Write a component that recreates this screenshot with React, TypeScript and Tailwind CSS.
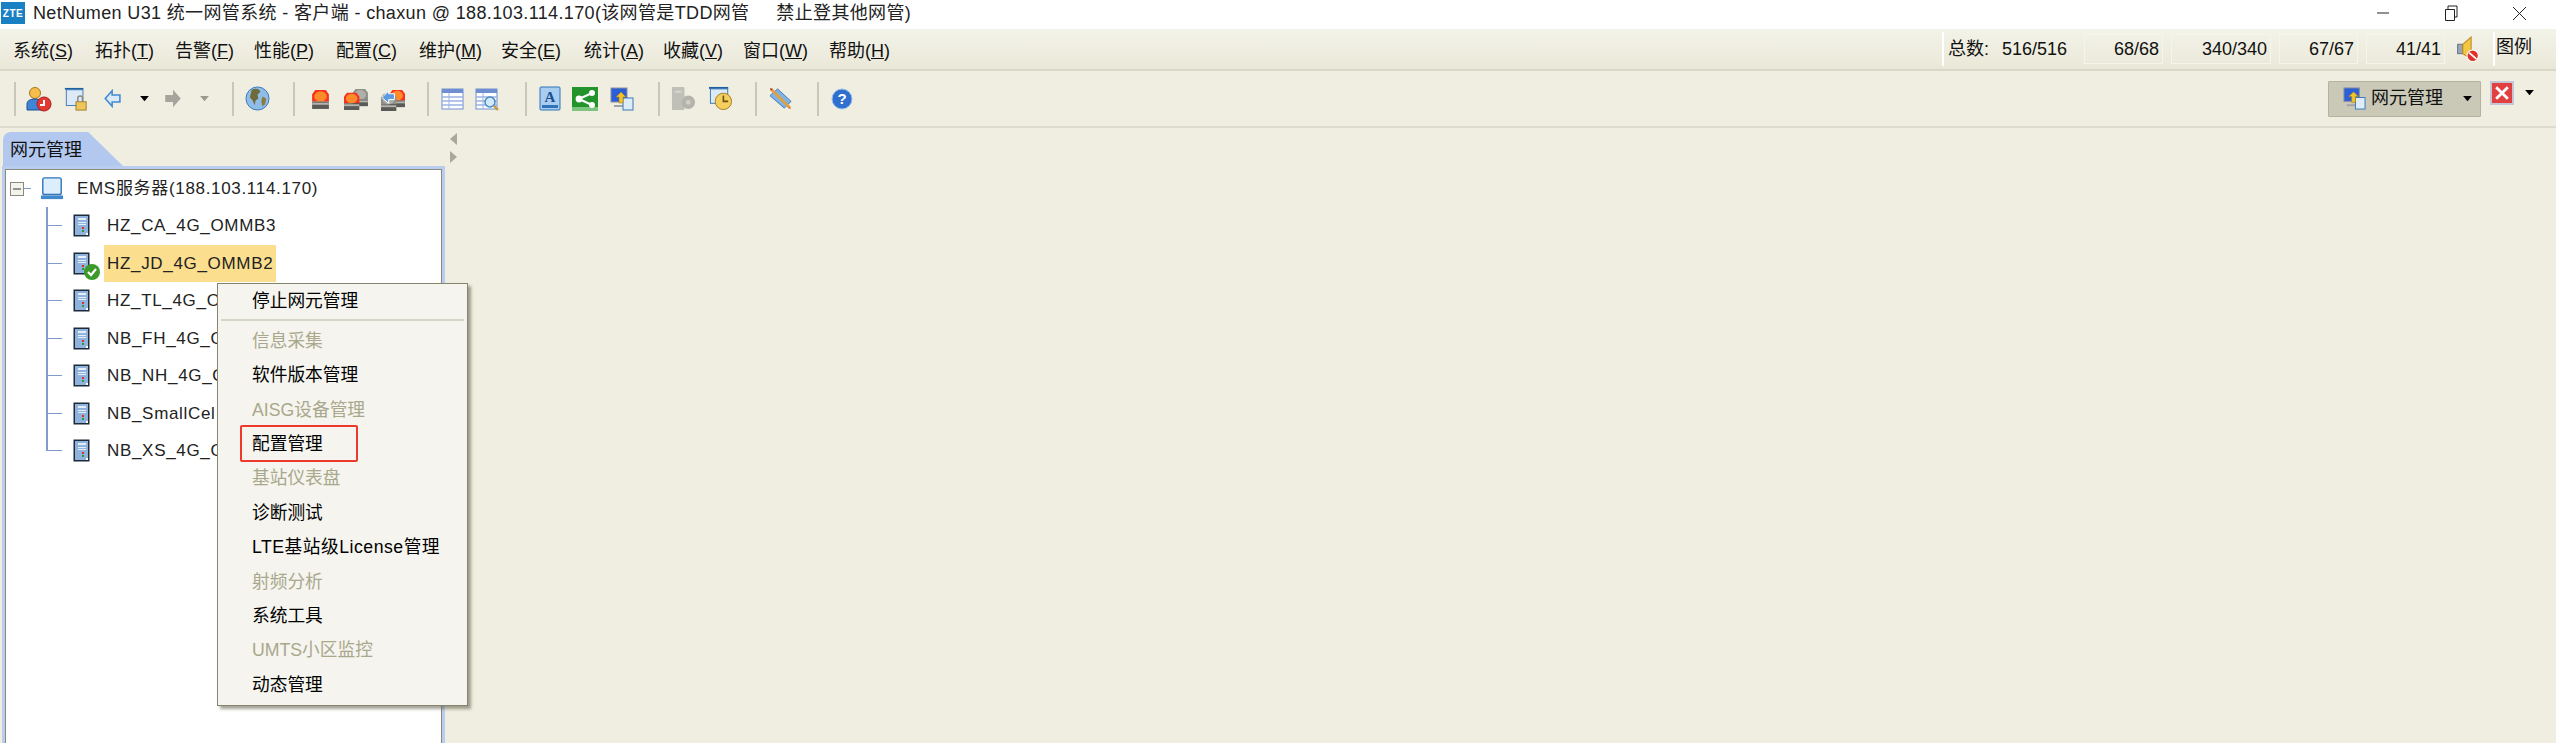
import type { ReactNode } from 'react'

const menus = [
  ['系统', 'S', 'w-[82px]'],
  ['拓扑', 'T', 'w-[80px]'],
  ['告警', 'F', 'w-[79px]'],
  ['性能', 'P', 'w-[82px]'],
  ['配置', 'C', 'w-[83px]'],
  ['维护', 'M', 'w-[82px]'],
  ['安全', 'E', 'w-[83px]'],
  ['统计', 'A', 'w-[79px]'],
  ['收藏', 'V', 'w-[80px]'],
  ['窗口', 'W', 'w-[86px]'],
  ['帮助', 'H', 'w-[70px]'],
]

const contextItems: { label: string; disabled?: boolean; boxed?: boolean; wide?: boolean }[] = [
  { label: '信息采集', disabled: true },
  { label: '软件版本管理' },
  { label: 'AISG设备管理', disabled: true },
  { label: '配置管理', boxed: true },
  { label: '基站仪表盘', disabled: true },
  { label: '诊断测试' },
  { label: 'LTE基站级License管理', wide: true },
  { label: '射频分析', disabled: true },
  { label: '系统工具' },
  { label: 'UMTS小区监控', disabled: true },
  { label: '动态管理' },
]

// names are cut by the popup menu in the screenshot, only the visible part is known
const nodes = ['HZ_CA_4G_OMMB3', 'HZ_JD_4G_OMMB2', 'HZ_TL_4G_O', 'NB_FH_4G_O', 'NB_NH_4G_O', 'NB_SmallCel', 'NB_XS_4G_O']

function Sep({ className = '' }: { className?: string }) {
  return <div className={`h-[34px] w-[2px] shrink-0 bg-[#c9c8b8] ${className}`} />
}

function Slot({ className, children }: { className: string; children: ReactNode }) {
  return <div className={`flex shrink-0 items-center justify-center ${className}`}>{children}</div>
}

function Caret({ muted }: { muted?: boolean }) {
  return (
    <svg width="11" height="7" viewBox="0 0 12 8">
      <path d="M1 1h10L6 7z" fill={muted ? '#9a9a90' : '#000'} />
    </svg>
  )
}

function UserIcon() {
  return (
    <svg width="26" height="26" viewBox="0 0 26 26">
      <circle cx="9" cy="7" r="5.5" fill="#f5bd4c" stroke="#a8741c" />
      <path d="M1 24v-6c0-3 3-5 8-5s7 2 7 5v6z" fill="#3f86d8" stroke="#1f4f96" />
      <circle cx="18" cy="18" r="7" fill="#e23a32" stroke="#a81e1e" />
      <path d="M18 14v5h-4" fill="none" stroke="#fff" strokeWidth="2" />
    </svg>
  )
}

function LockIcon() {
  return (
    <svg width="24" height="24" viewBox="0 0 26 26">
      <path d="M1 2h20" stroke="#1f5f9e" strokeWidth="2" />
      <rect x="2.5" y="3" width="18" height="17" fill="#dce9f6" stroke="#3a78b8" />
      <rect x="13" y="16" width="11" height="9" fill="#eec65a" stroke="#9a7a25" />
      <path d="M15 16v-4c0-3 5-3 5 0v4" fill="none" stroke="#8a8a80" strokeWidth="1.6" />
    </svg>
  )
}

function ArrowLeft() {
  return (
    <svg width="18" height="19" viewBox="0 0 20 22">
      <path d="M9 2 1 11l8 9v-5h9V7H9z" fill="#dbe9f8" stroke="#3f8ad0" strokeWidth="1.8" />
    </svg>
  )
}

function ArrowRight() {
  return (
    <svg width="18" height="19" viewBox="0 0 20 22">
      <path d="M10 1l9 10-9 10v-6H1V7h9z" fill="#a5a59d" />
    </svg>
  )
}

function Globe() {
  return (
    <svg width="25" height="25" viewBox="0 0 26 26">
      <circle cx="13" cy="13" r="12" fill="#8fbde8" stroke="#3a78b8" />
      <path d="M7 4c4-2 8-1 9 2l-3 3 1 4-3 2-1 5-2-5-3-3z" fill="#6f6a3a" />
      <path d="M18 11l4 2-1 6-3 2-1-5z" fill="#8c7a3e" />
    </svg>
  )
}

function Alarm({ gray }: { gray?: boolean }) {
  return (
    <g>
      <path d="M3 16V9l3-4h10l3 4v7z" fill={gray ? '#8f8f8a' : '#f8301c'} />
      <ellipse cx="11" cy="11" rx="6" ry="5" fill={gray ? '#b0b0aa' : '#ff8a2a'} />
      <rect x="3" y="16" width="16" height="7" fill="#5a5a58" />
      <rect x="3" y="17" width="16" height="2" fill="#b4b4ac" />
    </g>
  )
}

function AlarmOne() {
  return (
    <svg width="19" height="22" viewBox="2 3 18 21">
      <Alarm />
    </svg>
  )
}

function AlarmTwo() {
  return (
    <svg width="25" height="23" viewBox="2 1 26 24">
      <g transform="translate(9 -2)">
        <Alarm gray />
      </g>
      <g transform="translate(0 2)">
        <Alarm />
      </g>
    </svg>
  )
}

function AlarmThree() {
  return (
    <svg width="25" height="24" viewBox="2 0 26 25">
      <g transform="translate(9 -2)">
        <Alarm />
      </g>
      <g transform="translate(0 2)">
        <Alarm gray />
      </g>
      <path d="M4 11l7-7v3h6v6h-6v4z" fill="#5b9ade" stroke="#fff" strokeWidth="1" />
    </svg>
  )
}

function TableIcon({ search }: { search?: boolean }) {
  return (
    <svg width="24" height="24" viewBox="0 0 24 24">
      <rect x="1" y="2" width="21" height="20" fill="#fff" stroke="#6f8fd0" />
      <rect x="1" y="2" width="21" height="4" fill="#6f8fd0" />
      <path d="M1 10h21M1 14h21M1 18h21" stroke="#9ab4e4" strokeWidth="1.6" />
      <path d="M8 6v16" stroke="#9ab4e4" />
      {search && (
        <>
          <circle cx="15" cy="15" r="5" fill="#cfeafa" stroke="#4d86bc" strokeWidth="1.5" />
          <path d="M19 19l4 4" stroke="#c59a3a" strokeWidth="2.4" />
        </>
      )}
    </svg>
  )
}

function FontIcon() {
  return (
    <svg width="22" height="25" viewBox="0 0 22 25">
      <rect x="1" y="1" width="20" height="23" rx="1" fill="#a9cdf0" stroke="#2f74b8" />
      <path d="M3 19h16v3H3z" fill="#2f74b8" />
      <text x="11" y="16" textAnchor="middle" fontSize="15" fontWeight="700" fontFamily="Liberation Serif" fill="#1d4f92">
        A
      </text>
    </svg>
  )
}

function ShareIcon() {
  return (
    <svg width="26" height="24" viewBox="0 0 26 24">
      <rect width="26" height="24" fill="#23932c" />
      <rect y="20" width="26" height="4" fill="#7cc47f" />
      <path d="M7 12l13-6M7 12l13 6" stroke="#fff" strokeWidth="2" />
      <circle cx="7" cy="12" r="3.4" fill="#fff" />
      <circle cx="20" cy="6" r="3" fill="#fff" />
      <circle cx="20" cy="18" r="3" fill="#fff" />
    </svg>
  )
}

function SwitchIcon({ size = 24 }: { size?: number }) {
  return (
    <svg width={size} height={size} viewBox="0 0 24 24">
      <rect x="1" y="1" width="16" height="14" fill="#2a5fd8" stroke="#8a8f98" />
      <path d="M4 18h10v2H4z" fill="#a0a4a8" />
      <rect x="13" y="11" width="10" height="12" fill="#dcecf9" stroke="#3a78b8" />
      <path d="M11 5l5 5h-3v6H9v-6H6z" fill="#f3c32a" stroke="#a87c14" strokeWidth="0.6" />
    </svg>
  )
}

function GrayTool() {
  return (
    <svg width="25" height="25" viewBox="0 0 26 26">
      <rect x="1" y="1" width="13" height="24" rx="1" fill="#c0c0b8" />
      <rect x="4" y="5" width="7" height="2" fill="#d8d8d0" />
      <circle cx="18" cy="17" r="7" fill="#b4b4ac" />
      <circle cx="18" cy="17" r="2.5" fill="#d0d0c8" />
    </svg>
  )
}

function ClockIcon() {
  return (
    <svg width="25" height="25" viewBox="0 0 26 26">
      <path d="M1 2h20" stroke="#1f5f9e" strokeWidth="2" />
      <rect x="2.5" y="3" width="18" height="15" fill="#dce9f6" stroke="#3a78b8" />
      <circle cx="16" cy="16" r="8.5" fill="#f4cf5d" stroke="#a67c20" />
      <path d="M16 10v6h5" fill="none" stroke="#6a5010" strokeWidth="1.6" />
    </svg>
  )
}

function PencilIcon() {
  return (
    <svg width="23" height="23" viewBox="0 0 24 24">
      <path d="M9 2l14 13-7 7L1 9z" fill="#7fb3e8" stroke="#3a78b8" />
      <path d="M2 2l20 20" stroke="#e0a040" strokeWidth="3" />
      <path d="M1 1l3 1-2 2zM20 20l3 3-1 0z" fill="#b83a2a" />
    </svg>
  )
}

function HelpIcon() {
  return (
    <svg width="22" height="22" viewBox="0 0 22 22">
      <circle cx="11" cy="11" r="10" fill="#2f6fd0" stroke="#9cc0ea" />
      <text x="11" y="16" textAnchor="middle" fontSize="15" fontWeight="700" fontFamily="Liberation Sans" fill="#fff">
        ?
      </text>
    </svg>
  )
}

function SpeakerIcon() {
  return (
    <svg width="24" height="27" viewBox="0 0 22 26">
      <rect x="1" y="8" width="5" height="9" fill="#9aa6b8" stroke="#6a7688" />
      <path d="M6 8l8-7v21l-8-5z" fill="#f4c743" stroke="#b88a20" />
      <circle cx="15.5" cy="19" r="5.5" fill="#e0302a" stroke="#fff" />
      <path d="M12 16l7 6" stroke="#fff" strokeWidth="1.8" />
    </svg>
  )
}

function ServerIcon() {
  return (
    <svg width="17" height="23" viewBox="0 0 17 23">
      <rect x="0.5" y="0.5" width="16" height="22" fill="#1d2a3a" />
      <rect x="2" y="2" width="13" height="19" fill="#8fb3dc" />
      <rect x="5" y="4" width="8" height="2" fill="#e6eef8" />
      <rect x="5" y="8" width="8" height="1" fill="#e6eef8" />
      <rect x="5" y="10" width="8" height="1" fill="#e6eef8" />
      <rect x="9" y="13" width="2" height="2" fill="#d8302a" />
      <rect x="9" y="16" width="2" height="2" fill="#2c9a3c" />
      <rect x="13" y="19" width="2" height="2" fill="#fff" />
    </svg>
  )
}

function TreeRow({ name, index }: { name: string; index: number }) {
  const active = index === 1
  const last = index === nodes.length - 1
  return (
    <div className="flex h-[37.5px] items-center">
      <div className={`flex w-[16px] shrink-0 border-l-2 border-[#7f9dcb] ${last ? 'h-[19px] items-end self-start' : 'h-full items-center'}`}>
        <div className="h-[1px] w-full bg-[#7f9dcb]" />
      </div>
      <div className="relative ml-[11px] flex shrink-0">
        <ServerIcon />
        {active && (
          <svg className="absolute left-[11px] top-[12px]" width="16" height="16" viewBox="0 0 16 16">
            <circle cx="8" cy="8" r="8" fill="#3b9a2a" />
            <path d="M4 8l3 3 5-6" fill="none" stroke="#fff" strokeWidth="2.2" />
          </svg>
        )}
      </div>
      <div className={`ml-[14px] flex h-[37.5px] items-center whitespace-nowrap px-[3px] text-[17px] tracking-[0.68px] ${active ? 'bg-[#fbdf8e]' : ''}`}>
        {name}
      </div>
    </div>
  )
}

export default function App() {
  return (
    <div className="relative flex h-[743px] w-[2556px] flex-col overflow-hidden bg-[#f0eee1] font-['Liberation_Sans','Noto_Sans_CJK_SC',sans-serif] text-[#111]">
      <div className="flex h-[29px] shrink-0 items-center bg-white pb-[3px]">
        <div className="ml-[1px] flex h-[22px] w-[24px] items-center justify-center bg-[#1a80c4] text-[10px] font-bold tracking-[0.5px] text-white">ZTE</div>
        <div className="ml-[8px] whitespace-pre text-[18px] tracking-[0.36px] text-[#222]">
          NetNumen U31 统一网管系统 - 客户端 - chaxun @ 188.103.114.170(该网管是TDD网管{'     '}禁止登其他网管)
        </div>
        <div className="ml-auto flex items-center">
          <svg width="14" height="4" viewBox="0 0 14 4">
            <path d="M1 2h12" stroke="#222" strokeWidth="1" />
          </svg>
          <svg className="ml-[54px]" width="14" height="16" viewBox="0 0 14 16">
            <path d="M1.5 4.5h9v11h-9zM4 4V1h9v11h-2" fill="none" stroke="#222" />
          </svg>
          <svg className="ml-[54px] mr-[29px]" width="15" height="15" viewBox="0 0 15 15">
            <path d="M1 1l13 13M14 1L1 14" stroke="#222" />
          </svg>
        </div>
      </div>

      <div className="flex h-[42px] shrink-0 items-center border-b-2 border-[#d9d8c8] bg-gradient-to-b from-[#f4f3e9] to-[#e9e8d8] pl-[13px] pt-[4px] text-[18px]">
        {menus.map(([name, key, width]) => (
          <div key={key} className={`shrink-0 whitespace-nowrap ${width}`}>
            {name}(<u>{key}</u>)
          </div>
        ))}
        <div className="ml-auto mr-[24px] flex h-[36px] items-center self-end pb-[4px] text-[18px]">
          <div className="h-[34px] w-[2px] bg-white" />
          <div className="ml-[4px] w-[54px] whitespace-nowrap">总数:</div>
          <div className="w-[82px]">516/516</div>
          <div className="flex h-[30px] w-[79px] items-center justify-end border border-[#f6f5ec] pr-[3px]">68/68</div>
          <div className="ml-[8px] flex h-[30px] w-[100px] items-center justify-end border border-[#f6f5ec] pr-[3px]">340/340</div>
          <div className="ml-[8px] flex h-[30px] w-[79px] items-center justify-end border border-[#f6f5ec] pr-[3px]">67/67</div>
          <div className="ml-[8px] flex h-[30px] w-[79px] items-center justify-end border border-[#f6f5ec] pr-[3px]">41/41</div>
          <div className="ml-[11px] flex w-[37px]">
            <SpeakerIcon />
          </div>
          <div className="h-[34px] w-[2px] bg-white" />
          <div className="ml-[1px] -translate-y-[2px] whitespace-nowrap">图例</div>
        </div>
      </div>

      <div className="flex h-[57px] shrink-0 items-center border-b-2 border-[#dddccd]">
        <Sep className="ml-[14px]" />
        <Slot className="w-[46px]"><UserIcon /></Slot>
        <Slot className="w-[28px]"><LockIcon /></Slot>
        <Slot className="w-[46px]"><ArrowLeft /></Slot>
        <Slot className="w-[16px]"><Caret /></Slot>
        <Slot className="w-[42px]"><ArrowRight /></Slot>
        <Slot className="w-[20px]"><Caret muted /></Slot>
        <Sep className="ml-[18px]" />
        <Slot className="w-[46px]"><Globe /></Slot>
        <Sep className="ml-[13px]" />
        <Slot className="ml-[8px] w-[34px]"><AlarmOne /></Slot>
        <Slot className="w-[36px]"><AlarmTwo /></Slot>
        <Slot className="w-[38px]"><AlarmThree /></Slot>
        <Sep className="ml-[16px]" />
        <Slot className="ml-[8px] w-[32px]"><TableIcon /></Slot>
        <Slot className="w-[36px]"><TableIcon search /></Slot>
        <Sep className="ml-[20px]" />
        <Slot className="ml-[7px] w-[32px]"><FontIcon /></Slot>
        <Slot className="w-[38px]"><ShareIcon /></Slot>
        <Slot className="w-[36px]"><SwitchIcon /></Slot>
        <Sep className="ml-[18px]" />
        <Slot className="w-[46px]"><GrayTool /></Slot>
        <Slot className="w-[28px]"><ClockIcon /></Slot>
        <Sep className="ml-[21px]" />
        <Slot className="w-[46px]"><PencilIcon /></Slot>
        <Sep className="ml-[14px]" />
        <Slot className="w-[46px]"><HelpIcon /></Slot>
        <div className="ml-auto mr-[21px] flex items-center">
          <div className="flex h-[36px] w-[153px] items-center rounded-[1px] border border-[#b5b3a0] bg-[#cac8b7] pl-[14px] text-[18px]">
            <SwitchIcon size={23} />
            <span className="ml-[5px] whitespace-nowrap">网元管理</span>
            <span className="ml-[19px] flex">
              <Caret />
            </span>
          </div>
          <div className="ml-[9px] flex h-[24px] w-[24px] -translate-y-[6px] items-center justify-center border-2 border-[#c4c6d6] bg-[#e04040]">
            <svg width="14" height="14" viewBox="0 0 12 12">
              <path d="M1 1l10 10M11 1L1 11" stroke="#fff" strokeWidth="2.4" />
            </svg>
          </div>
          <div className="ml-[10px] flex -translate-y-[6px]">
            <Caret />
          </div>
        </div>
      </div>

      <div className="flex min-h-0 flex-1">
        <div className="flex w-[445px] shrink-0 flex-col pl-[2px] pt-[4px]">
          <div className="ml-[1px] flex h-[34px] w-[120px] items-center rounded-tl-[8px] bg-[#b3c8ef] pl-[7px] pt-[2px] text-[18px] [clip-path:polygon(0_0,71%_0,100%_100%,0_100%)]">
            网元管理
          </div>
          <div className="flex-1 border-l-[3px] border-r-[3px] border-t-[3px] border-[#b9cdf0]">
            <div className="h-full border-l border-r border-t border-[#8b8a78] bg-white text-[#222]">
              <div className="flex h-[37px] items-center pl-[4px]">
                <svg width="14" height="14" viewBox="0 0 14 14">
                  <rect x="0.5" y="0.5" width="13" height="13" fill="#f4f4ee" stroke="#8a8a80" />
                  <path d="M3 7h8" stroke="#333" />
                </svg>
                <div className="h-[1px] w-[7px] bg-[#7f9dcb]" />
                <svg className="ml-[9px]" width="24" height="25" viewBox="0 0 26 25">
                  <rect x="3" y="1" width="20" height="18" rx="2" fill="#dcedfb" stroke="#2f74b8" strokeWidth="1.5" />
                  <path d="M1 20h24v4H1z" fill="#3f88cc" />
                </svg>
                <div className="ml-[13px] whitespace-nowrap text-[17px] tracking-[0.68px]">EMS服务器(188.103.114.170)</div>
              </div>
              <div className="ml-[40px]">
                {nodes.map((name, i) => (
                  <TreeRow key={name} name={name} index={i} />
                ))}
              </div>
            </div>
          </div>
        </div>
        <div className="flex flex-col gap-[6px] pl-[5px] pt-[5px]">
          <svg width="7" height="12" viewBox="0 0 7 12">
            <path d="M7 0v12L0 6z" fill="#a8a89c" />
          </svg>
          <svg width="7" height="12" viewBox="0 0 7 12">
            <path d="M0 0v12l7-6z" fill="#a8a89c" />
          </svg>
        </div>
      </div>

      <div className="absolute left-[217px] top-[283px] h-[423px] w-[251px] border border-[#85846c] bg-[#f5f4ee] text-[17.7px] text-black shadow-[3px_3px_3px_rgba(90,90,70,0.55)]">
        <div className="flex h-[35px] items-center pl-[34px]">停止网元管理</div>
        <div className="mx-[3px] mb-[3px] h-[2px] bg-[#d5d4c6]" />
        {contextItems.map((item) => (
          <div
            key={item.label}
            className={`relative flex h-[34.4px] items-center whitespace-nowrap pl-[34px] ${item.disabled ? 'text-[#a9a88c]' : ''} ${
              item.wide ? 'tracking-[0.5px]' : ''
            }`}
          >
            {item.label}
            {item.boxed && <div className="absolute left-[22px] top-[-2px] h-[37px] w-[118px] rounded-[2px] border-[2px] border-[#ee3a2c]" />}
          </div>
        ))}
      </div>
    </div>
  )
}
